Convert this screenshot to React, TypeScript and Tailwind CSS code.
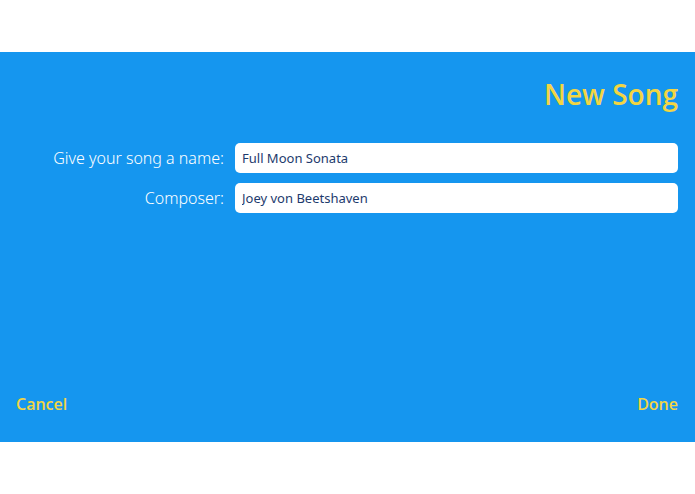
import React, { useState } from "react";

const App: React.FC = () => {
  const [name, setName] = useState("Full Moon Sonata");
  const [composer, setComposer] = useState("Joey von Beetshaven");

  return (
    <div className="min-h-[494px] bg-white pt-[52px]">
      <div className="flex h-[390px] flex-col bg-[#1596ef] px-4 font-['Open_Sans',sans-serif]">
        {/* Title */}
        <h1 className="mt-[22px] pr-[1px] text-right text-[28px] font-semibold leading-[40px] text-[#f3d543]">
          New Song
        </h1>

        {/* Form */}
        <div className="mt-[29px] grid grid-cols-[208px_1fr] gap-x-[11px] gap-y-[10px] pr-[1px]">
          <label className="self-center text-right font-['Noto_Sans',sans-serif] text-[16px] font-light text-white">
            Give your song a name:
          </label>
          <input
            value={name}
            onChange={(e) => setName(e.target.value)}
            className="h-[30px] rounded-[5px] bg-white px-[7px] font-['Noto_Sans',sans-serif] text-[13px] text-[#1d3a6d] outline-none"
          />
          <label className="self-center text-right font-['Noto_Sans',sans-serif] text-[16px] font-light text-white">
            Composer:
          </label>
          <input
            value={composer}
            onChange={(e) => setComposer(e.target.value)}
            className="h-[30px] rounded-[5px] bg-white px-[7px] font-['Noto_Sans',sans-serif] text-[13px] text-[#1d3a6d] outline-none"
          />
        </div>

        <div className="flex-1" />

        {/* Footer actions */}
        <div className="flex items-center justify-between pb-[26px] pr-[1px]">
          <button className="text-[16px] font-semibold leading-[24px] text-[#f3d543]">Cancel</button>
          <button className="text-[16px] font-semibold leading-[24px] text-[#f3d543]">Done</button>
        </div>
      </div>
    </div>
  );
};

export default App;
